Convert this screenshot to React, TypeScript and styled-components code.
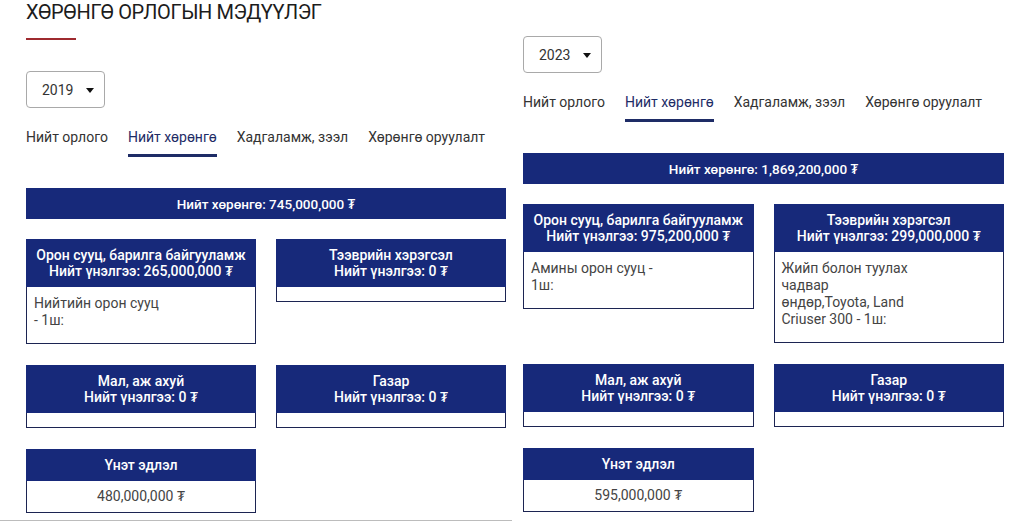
import React, { useState } from 'react';
import styled, { createGlobalStyle } from 'styled-components';

interface AssetCard {
  title: string;
  total?: string;
  lines?: string[];
  value?: string;
}

interface Declaration {
  year: string;
  total: string;
  cards: AssetCard[];
}

const GlobalStyle = createGlobalStyle`
  html, body {
    margin: 0;
    padding: 0;
    background: #fff;
    font-family: Roboto, "Noto Sans", "DejaVu Sans", sans-serif;
    overflow: hidden;
  }
`;

const Page = styled.div`
  display: grid;
  grid-template-columns: 512px 1fr;
  height: 521px;
`;

const Column = styled.div<{ $first?: boolean }>`
  display: flex;
  flex-direction: column;
  padding: ${p => (p.$first ? '0 6px 0 26px' : '36px 8px 0 11px')};
  border-bottom: ${p => (p.$first ? '1px solid #bcbcbc' : 'none')};
  box-sizing: border-box;
`;

const Titulo = styled.h1`
  margin: 0;
  font-size: 20px;
  line-height: 24px;
  font-weight: 400;
  color: #1c1c1c;
  letter-spacing: -0.4px;
`;

const RedLine = styled.div`
  width: 50px;
  height: 2px;
  background: #9e2a2f;
  margin: 14px 0 31px;
`;

const YearSelect = styled.div`
  display: flex;
  align-items: center;
  gap: 13px;
  width: 79px;
  height: 37px;
  box-sizing: border-box;
  padding: 0 11px 0 15px;
  border: 1px solid #a9a9a9;
  border-radius: 4px;
  font-size: 14px;
  color: #333;
  margin-bottom: 19px;
  cursor: pointer;
`;

const Caret = styled.span`
  width: 0;
  height: 0;
  border-left: 4px solid transparent;
  border-right: 4px solid transparent;
  border-top: 5px solid #111;
  margin-top: 1px;
`;

const Tabs = styled.div`
  display: flex;
  gap: 20px;
`;

const Tab = styled.div<{ $active?: boolean }>`
  font-size: 14px;
  line-height: 20px;
  padding-bottom: 7px;
  color: ${p => (p.$active ? '#1e2c66' : '#333')};
  border-bottom: 3px solid ${p => (p.$active ? '#1e2c66' : 'transparent')};
  cursor: pointer;
  white-space: nowrap;
`;

const TotalBar = styled.div`
  margin: 31px 0 20px;
  height: 31px;
  display: flex;
  align-items: center;
  justify-content: center;
  background: #17297a;
  color: #fff;
  font-size: 13.5px;
  font-weight: 500;
`;

const Grid = styled.div`
  display: grid;
  grid-template-columns: 1fr 1fr;
  column-gap: 20px;
  row-gap: 21px;
  align-items: start;
`;

const Card = styled.div`
  display: flex;
  flex-direction: column;
`;

const CardHead = styled.div`
  background: #17297a;
  color: #fff;
  text-align: center;
  font-size: 14px;
  font-weight: 500;
  line-height: 16px;
  padding: 8px 6px;
`;

const CardBody = styled.div<{ $center?: boolean }>`
  border: 1px solid #1c2452;
  border-top: none;
  padding: 7px;
  font-size: 14px;
  line-height: 17px;
  color: #444;
  text-align: ${p => (p.$center ? 'center' : 'left')};
`;

const Lines = styled.p`
  margin: 1px 0 7px;
`;

const Line = styled.span`
  display: block;
`;

const tabNames = ['Нийт орлого', 'Нийт хөрөнгө', 'Хадгаламж, зээл', 'Хөрөнгө оруулалт'];

const declarations: Declaration[] = [
  {
    year: '2019',
    total: '745,000,000',
    cards: [
      { title: 'Орон сууц, барилга байгууламж', total: '265,000,000', lines: ['Нийтийн орон сууц', '- 1ш:'] },
      { title: 'Тээврийн хэрэгсэл', total: '0' },
      { title: 'Мал, аж ахуй', total: '0' },
      { title: 'Газар', total: '0' },
      { title: 'Үнэт эдлэл', value: '480,000,000' },
    ],
  },
  {
    year: '2023',
    total: '1,869,200,000',
    cards: [
      { title: 'Орон сууц, барилга байгууламж', total: '975,200,000', lines: ['Амины орон сууц -', '1ш:'] },
      {
        title: 'Тээврийн хэрэгсэл',
        total: '299,000,000',
        lines: ['Жийп болон туулах', 'чадвар', 'өндөр,Toyota, Land', 'Criuser 300 - 1ш:'],
      },
      { title: 'Мал, аж ахуй', total: '0' },
      { title: 'Газар', total: '0' },
      { title: 'Үнэт эдлэл', value: '595,000,000' },
    ],
  },
];

const DeclarationPanel: React.FC<{ data: Declaration }> = ({ data }) => {
  const [tab, setTab] = useState(1);

  return (
    <>
      <YearSelect>
        {data.year}
        <Caret />
      </YearSelect>
      <Tabs>
        {tabNames.map((name, i) => (
          <Tab key={name} $active={tab === i} onClick={() => setTab(i)}>
            {name}
          </Tab>
        ))}
      </Tabs>
      <TotalBar>Нийт хөрөнгө: {data.total} ₮</TotalBar>
      <Grid>
        {data.cards.map(card => (
          <Card key={card.title}>
            <CardHead>
              {card.title}
              {card.total !== undefined && <Line>Нийт үнэлгээ: {card.total} ₮</Line>}
            </CardHead>
            {card.value ? (
              <CardBody $center>{card.value} ₮</CardBody>
            ) : (
              <CardBody>
                {card.lines && (
                  <Lines>
                    {card.lines.map(l => (
                      <Line key={l}>{l}</Line>
                    ))}
                  </Lines>
                )}
              </CardBody>
            )}
          </Card>
        ))}
      </Grid>
    </>
  );
};

const App: React.FC = () => {
  return (
    <>
      <GlobalStyle />
      <Page>
        <Column $first>
          <Titulo>ХӨРӨНГӨ ОРЛОГЫН МЭДҮҮЛЭГ</Titulo>
          <RedLine />
          <DeclarationPanel data={declarations[0]} />
        </Column>
        <Column>
          <DeclarationPanel data={declarations[1]} />
        </Column>
      </Page>
    </>
  );
};

export default App;
